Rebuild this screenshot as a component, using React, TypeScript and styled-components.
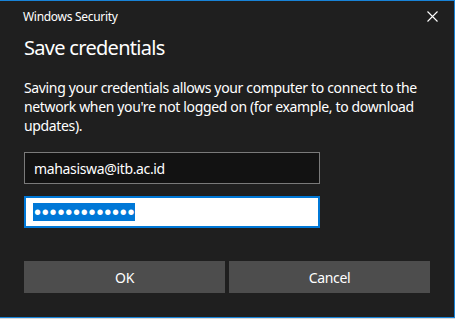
import React from "react";
import styled, { createGlobalStyle } from "styled-components";

const GlobalStyle = createGlobalStyle`
  html, body {
    margin: 0;
    padding: 0;
    background: #d9d9d9;
  }
  body {
    font-family: "Noto Sans", "Open Sans", sans-serif;
    letter-spacing: -0.35px;
  }
`;

const Window = styled.div`
  box-sizing: border-box;
  width: 455px;
  height: 318px;
  background: #1f1f1f;
  border-top: 1px solid #1883d7;
  border-right: 1px solid #1883d7;
  border-bottom: 1px solid #1883d7;
  display: flex;
  flex-direction: column;
  color: #ffffff;
`;

const TitleBar = styled.div`
  display: flex;
  align-items: center;
  justify-content: space-between;
  height: 31px;
  padding: 0 16px 0 23px;
`;

const TitleText = styled.span`
  font-size: 12px;
  letter-spacing: -0.3px;
  color: #ffffff;
`;

const CloseButton = styled.div`
  width: 12px;
  height: 12px;
  display: flex;
  align-items: center;
  justify-content: center;
`;

const Body = styled.div`
  display: flex;
  flex-direction: column;
  padding: 0 24px;
`;

const Heading = styled.h1`
  margin: 0;
  font-size: 20px;
  font-weight: 400;
  letter-spacing: -0.7px;
  line-height: 32px;
  height: 46px;
`;

const Message = styled.p`
  margin: 0;
  font-size: 14px;
  line-height: 19px;
  height: 74px;
`;

const Field = styled.div<{ $focused?: boolean }>`
  box-sizing: border-box;
  width: 296px;
  height: 32px;
  display: flex;
  align-items: center;
  background: ${(p) => (p.$focused ? "#ffffff" : "#121212")};
  border: ${(p) => (p.$focused ? "2px solid #0078d7" : "1px solid #7a7a7a")};
  padding-left: ${(p) => (p.$focused ? "7px" : "9px")};
  font-size: 14px;
  color: #ffffff;
  margin-bottom: 12px;
`;

const Selection = styled.span`
  display: inline-block;
  height: 18px;
  background: #0078d7;
  color: #ffffff;
  font-family: "Liberation Sans", Arial, sans-serif;
  font-size: 20px;
  letter-spacing: 0.8px;
  line-height: 18px;
  padding: 0 0 0 1px;
`;

const Buttons = styled.div`
  display: grid;
  grid-template-columns: 201px 201px;
  column-gap: 4px;
  margin-top: 21px;
`;

const Button = styled.div`
  height: 32px;
  background: #4d4d4d;
  display: flex;
  align-items: center;
  justify-content: center;
  font-size: 14px;
  color: #ffffff;
`;

export default function App() {
  return (
    <>
      <GlobalStyle />
      <Window>
        <TitleBar>
          <TitleText>Windows Security</TitleText>
          <CloseButton>
            <svg width="11" height="11" viewBox="0 0 11 11">
              <path d="M0.5 0.5 L10.5 10.5 M10.5 0.5 L0.5 10.5" stroke="#ffffff" strokeWidth="1.1" />
            </svg>
          </CloseButton>
        </TitleBar>
        <Body>
          <Heading>Save credentials</Heading>
          <Message>
            Saving your credentials allows your computer to connect to the network when you're not
            logged on (for example, to download updates).
          </Message>
          <Field>mahasiswa@itb.ac.id</Field>
          <Field $focused>
            <Selection>•••••••••••••</Selection>
          </Field>
          <Buttons>
            <Button>OK</Button>
            <Button>Cancel</Button>
          </Buttons>
        </Body>
      </Window>
    </>
  );
}
